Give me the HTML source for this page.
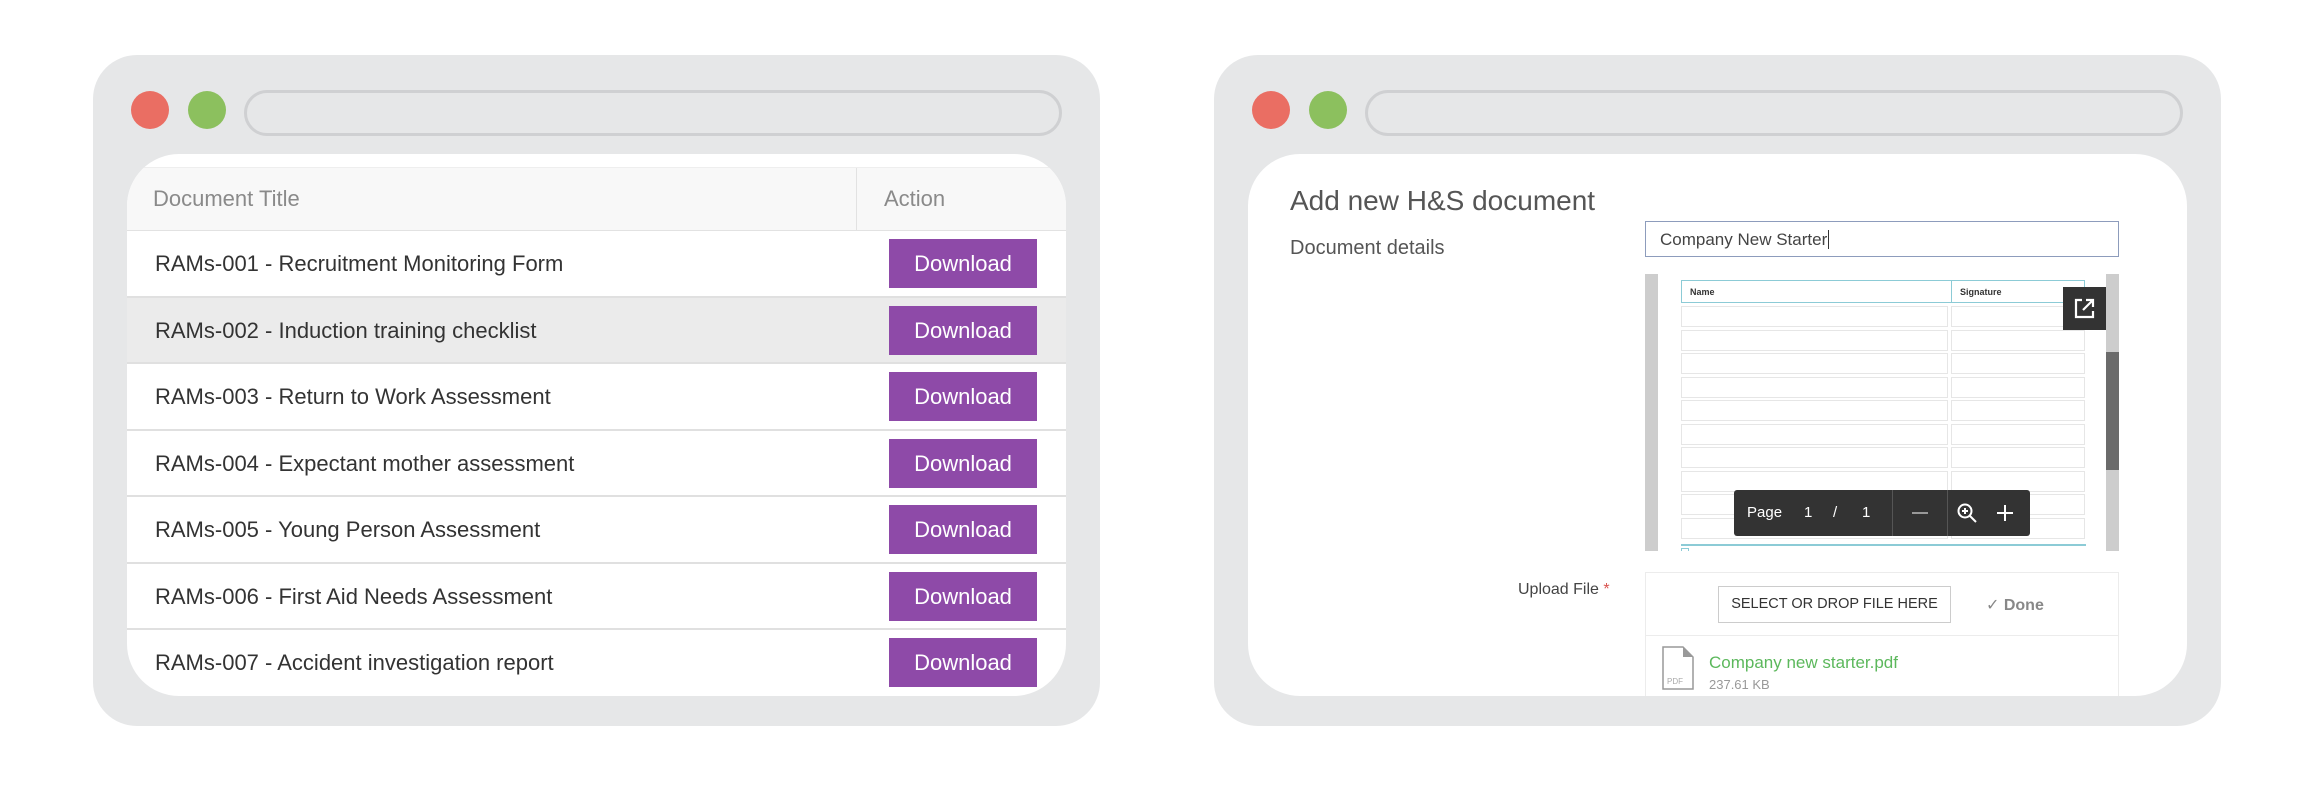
<!DOCTYPE html>
<html><head><meta charset="utf-8"><style>
*{box-sizing:border-box;margin:0;padding:0}
body{width:2322px;height:792px;background:#fff;position:relative;overflow:hidden;font-family:"Liberation Sans",sans-serif}
.win{position:absolute;top:55px;width:1007px;height:671px;background:#e6e7e8;border-radius:44px}
.dot{position:absolute;top:91px;width:38px;height:38px;border-radius:50%}
.url{position:absolute;top:90px;height:46px;border:3px solid #cfd0d2;border-radius:23px}
.inner{position:absolute;top:154px;height:542px;background:#fff;border-radius:52px;overflow:hidden}
.hdr{position:absolute;left:0;right:0;top:13px;height:64px;background:#f8f8f8;border-bottom:1px solid #e2e2e2;border-top:1px solid #eee}
.hdr span{position:absolute;top:18px;font-size:22px;color:#8a8a8a}
.row{position:absolute;left:0;right:0;height:66.5px;border-bottom:2px solid #e0e0e0}
.row span{position:absolute;left:28px;top:20px;font-size:22px;color:#333}
.btn{position:absolute;left:762px;top:8px;width:148px;height:49px;background:#8e4aa8;color:#fff;font-size:22px;text-align:center;line-height:49px}
.abs{position:absolute}
.c1,.c2{position:absolute;height:21px;border:1.5px solid #e6e6e6}
.c1{left:36px;width:267px}.c2{left:306px;width:134px}
</style></head><body>
<div class="win" style="left:93px"></div>
<div class="dot" style="left:131px;background:#ea6e63"></div>
<div class="dot" style="left:188px;background:#8cc05e"></div>
<div class="url" style="left:244px;width:818px"></div>
<div class="inner" style="left:127px;width:939px">
 <div class="hdr"><span style="left:26px">Document Title</span><div class="abs" style="left:729px;top:0;bottom:0;border-left:1px solid #e2e2e2"></div><span style="left:757px">Action</span></div>
 <div class="row" style="top:77px"><span>RAMs-001 - Recruitment Monitoring Form</span><div class="btn">Download</div></div>
 <div class="row" style="top:143.5px;background:#ebebeb"><span>RAMs-002 - Induction training checklist</span><div class="btn">Download</div></div>
 <div class="row" style="top:210px"><span>RAMs-003 - Return to Work Assessment</span><div class="btn">Download</div></div>
 <div class="row" style="top:276.5px"><span>RAMs-004 - Expectant mother assessment</span><div class="btn">Download</div></div>
 <div class="row" style="top:343px"><span>RAMs-005 - Young Person Assessment</span><div class="btn">Download</div></div>
 <div class="row" style="top:409.5px"><span>RAMs-006 - First Aid Needs Assessment</span><div class="btn">Download</div></div>
 <div class="row" style="top:476px;border:none"><span>RAMs-007 - Accident investigation report</span><div class="btn">Download</div></div>
</div>

<div class="win" style="left:1214px"></div>
<div class="dot" style="left:1252px;background:#ea6e63"></div>
<div class="dot" style="left:1309px;background:#8cc05e"></div>
<div class="url" style="left:1365px;width:818px"></div>
<div class="inner" style="left:1248px;width:939px"></div>
<div class="abs" style="left:1290px;top:185px;font-size:28px;color:#555">Add new H&amp;S document</div>
<div class="abs" style="left:1290px;top:237px;font-size:20px;color:#555">Document details</div>
<div class="abs" style="left:1645px;top:221px;width:474px;height:36px;border:1.5px solid #8d9cbc;font-size:17px;color:#444;padding:8px 0 0 14px">Company New Starter<span style="border-left:1px solid #333;margin-left:1px"></span></div>
<div class="abs" style="left:1645px;top:274px;width:474px;height:277px;background:#fff;overflow:hidden">
 <div class="abs" style="left:0;top:0;width:13px;height:277px;background:#cdcdcd"></div>
 <div class="abs" style="right:0;top:0;width:13px;height:277px;background:#cdcdcd"></div>
 <div class="abs" style="right:0;top:78px;width:13px;height:118px;background:#6b6b6b"></div>
 <div class="abs" style="left:36px;top:6px;width:272px;height:23px;border:1.5px solid #8ccbd6;border-right:none;font-size:9px;font-weight:bold;color:#333;padding:6px 8px">Name</div>
 <div class="abs" style="left:306px;top:6px;width:134px;height:23px;border:1.5px solid #8ccbd6;font-size:9px;font-weight:bold;color:#333;padding:6px 8px">Signature</div>
 <div class="c1" style="top:32px"></div><div class="c2" style="top:32px"></div>
 <div class="c1" style="top:55.5px"></div><div class="c2" style="top:55.5px"></div>
 <div class="c1" style="top:79px"></div><div class="c2" style="top:79px"></div>
 <div class="c1" style="top:102.5px"></div><div class="c2" style="top:102.5px"></div>
 <div class="c1" style="top:126px"></div><div class="c2" style="top:126px"></div>
 <div class="c1" style="top:149.5px"></div><div class="c2" style="top:149.5px"></div>
 <div class="c1" style="top:173px"></div><div class="c2" style="top:173px"></div>
 <div class="c1" style="top:196.5px"></div><div class="c2" style="top:196.5px"></div>
 <div class="c1" style="top:220px"></div><div class="c2" style="top:220px"></div>
 <div class="c1" style="top:243.5px"></div><div class="c2" style="top:243.5px"></div>
 <div class="abs" style="left:36px;top:270px;width:405px;height:2px;background:#8ccbd6"></div>
 <div class="abs" style="left:36px;top:274px;width:8px;height:5px;border:1.5px solid #8ccbd6"></div>
</div>
<div class="abs" style="left:2063px;top:287px;width:43px;height:43px;background:#333">
 <svg width="43" height="43" viewBox="0 0 43 43"><path d="M19 13h-6v17h17v-6M23 13h7v7M30 13l-10 10" stroke="#fff" stroke-width="2.2" fill="none"/></svg>
</div>
<div class="abs" style="left:1734px;top:490px;width:296px;height:46px;background:#333;border-radius:3px;color:#fff;font-size:15px">
 <span class="abs" style="left:13px;top:14px">Page</span>
 <span class="abs" style="left:70px;top:14px">1</span>
 <span class="abs" style="left:99px;top:14px">/</span>
 <span class="abs" style="left:128px;top:14px">1</span>
 <div class="abs" style="left:158px;top:0;bottom:0;border-left:1px solid #555"></div>
 <div class="abs" style="left:213px;top:0;bottom:0;border-left:1px solid #555"></div>
 <div class="abs" style="left:178px;top:22px;width:16px;height:2px;background:#999"></div>
 <svg class="abs" style="left:222px;top:12px" width="24" height="24" viewBox="0 0 24 24"><circle cx="9" cy="9" r="6.5" stroke="#fff" stroke-width="2" fill="none"/><path d="M14 14l6 6M9 6v6M6 9h6" stroke="#fff" stroke-width="2"/></svg>
 <svg class="abs" style="left:262px;top:14px" width="18" height="18"><path d="M9 1v16M1 9h16" stroke="#fff" stroke-width="2"/></svg>
</div>
<div class="abs" style="left:1518px;top:581px;font-size:16px;color:#444">Upload File <span style="color:#d9534f">*</span></div>
<div class="abs" style="left:1645px;top:572px;width:474px;height:124px;border:1.5px solid #ececec;border-bottom:none">
 <div class="abs" style="left:0;right:0;top:62px;border-top:1.5px solid #ececec"></div>
 <div class="abs" style="left:72px;top:13px;width:233px;height:37px;border:1.5px solid #ccc;font-size:14.5px;color:#333;text-align:center;line-height:34px">SELECT OR DROP FILE HERE</div>
 <div class="abs" style="left:340px;top:22px;font-size:16px;color:#888;font-weight:bold"><span style="font-weight:normal">✓</span> Done</div>
 <svg class="abs" style="left:16px;top:73px" width="32" height="44" viewBox="0 0 32 44"><path d="M1 1h20l10 10v32H1z" fill="#fff" stroke="#999" stroke-width="1.5"/><path d="M21 1v10h10z" fill="#999"/><text x="5" y="38" font-size="8" fill="#aaa" font-family="Liberation Sans">PDF</text></svg>
 <div class="abs" style="left:63px;top:80px;font-size:17px;color:#5cb85c">Company new starter.pdf</div>
 <div class="abs" style="left:63px;top:104px;font-size:13px;color:#999">237.61 KB</div>
</div>
</body></html>
